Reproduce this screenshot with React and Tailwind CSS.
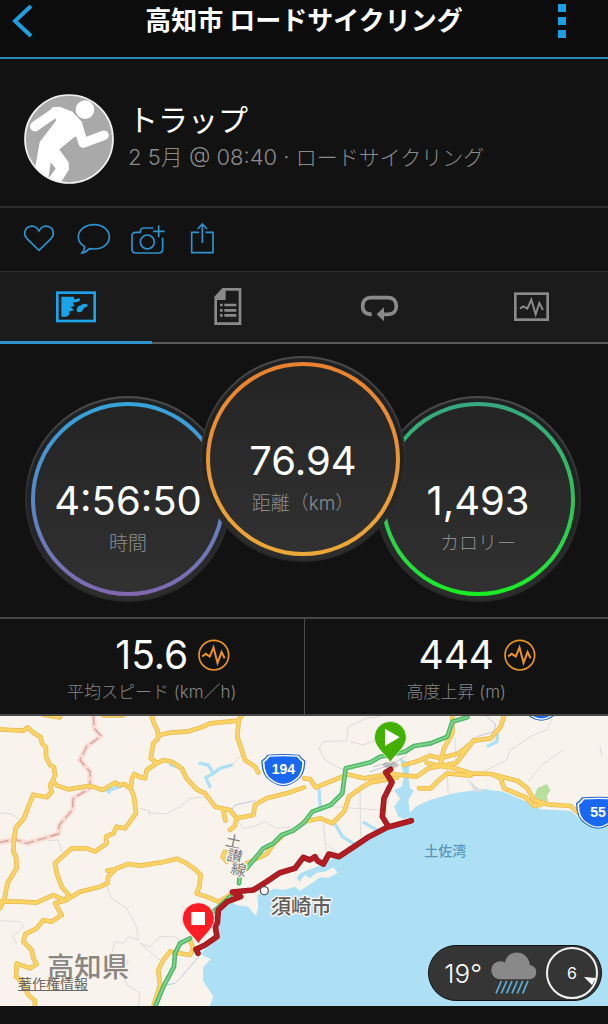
import { useState } from "react";

/**
 * ギザギザの波形アイコン
 */
function PulseIcon() {
  return (
    <svg viewBox="597 85 95 95" className="size-8" fill="none" stroke="#e8932c">
      <circle cx="644" cy="133" r="44" strokeWidth="5" />
      <path
        d="M609 137 L620 129 L632 137 L643 110 L655 156 L667 124 L676 142"
        strokeWidth="6"
      />
    </svg>
  );
}

const actions = [
  {
    label: "いいね",
    viewBox: "63 42 108 108",
    icon: (
      <path d="M117 136 L80 100 C70 88 73 70 87 65 C99 61 111 66 117 78 C123 66 135 61 147 65 C161 70 164 88 154 100 Z" />
    ),
  },
  {
    label: "コメント",
    viewBox: "225 42 108 108",
    icon: (
      <path d="M282 59 C308 59 328 75 328 96 C328 117 308 132 282 132 C277 132 273 132 268 131 C262 138 255 143 246 144 C251 138 254 132 254 125 C242 118 235 108 235 96 C235 75 256 59 282 59 Z" />
    ),
  },
  {
    label: "写真を追加",
    viewBox: "390 42 108 108",
    icon: (
      <>
        <path d="M463 69 H432 C428 69 426 71 425 75 L423 82 H411 C403 82 399 86 399 93 V133 C399 141 403 144 411 144 H479 C487 144 491 141 491 133 V98" />
        <circle cx="445" cy="111" r="21" />
        <path d="M479 61 V97 M462 79 H497" />
      </>
    ),
  },
  {
    label: "共有",
    viewBox: "549 42 108 108",
    icon: (
      <path d="M597 82 H575 V143 H639 V82 H617 M607 114 V58 M593 72 L607 57 L621 72" />
    ),
  },
];

const tabs = [
  {
    label: "マップ",
    viewBox: "165 246 126 120",
    icon: (
      <>
        <rect x="172" y="263" width="112" height="85" fill="none" stroke="currentColor" strokeWidth="8" />
        <path
          fill="currentColor"
          d="M184 275 H222 L222 283 L238 280 Q244 286 235 290 L218 293 L224 303 L212 306 L222 316 L206 320 L210 327 L200 335 H184 Z M230 318 Q229 303 244 301 L248 297 Q262 295 264 302 Q258 307 253 308 Q249 313 246 319 Q236 325 230 318 Z"
        />
      </>
    ),
  },
  {
    label: "統計",
    viewBox: "620 246 126 120",
    icon: (
      <>
        <path
          d="M668 253 H719 V356 H646 V277 Z"
          fill="none"
          stroke="currentColor"
          strokeWidth="8"
        />
        <path d="M668 251 L676 251 V285 H644 V275 Z" fill="currentColor" />
        <path
          d="M659 300 H667 M672 300 H708 M659 316 H667 M672 316 H708 M659 331 H667 M672 331 H708"
          stroke="currentColor"
          strokeWidth="8"
        />
      </>
    ),
  },
  {
    label: "ラップ",
    viewBox: "165 246 126 120",
    icon: (
      <>
        <path
          d="M203 328 C184 328 176 318 176 304 C176 287 186 278 200 278 H253 C268 278 277 288 277 304 C277 319 268 328 252 328 H238"
          fill="none"
          stroke="currentColor"
          strokeWidth="11"
        />
        <path d="M218 328 L240 307 V349 Z" fill="currentColor" />
      </>
    ),
  },
  {
    label: "グラフ",
    viewBox: "621 246 126 120",
    icon: (
      <g fill="none" stroke="currentColor">
        <rect x="634" y="266" width="97" height="78" strokeWidth="8" />
        <path
          d="M648 311 L658 304 L670 311 L682 284 L695 328 L706 294 L717 315"
          strokeWidth="6"
        />
      </g>
    ),
  },
];

/**
 * 円形ゲージ
 */
function Gauge({ value, label, ring, className }) {
  return (
    <div
      className={`size-[206px] shrink-0 rounded-full bg-linear-to-b from-[#4c4c4c] via-[#2c2c2c] to-[#282828] p-[2px] ${className}`}
    >
      <div className="size-full rounded-full bg-linear-to-b from-[#1f2123] via-[#222222] to-[#2e2e2e] p-[4px]">
        <div className={`size-full rounded-full bg-linear-to-b p-[4px] ${ring}`}>
          <div className="flex size-full flex-col items-center rounded-full bg-linear-to-b from-[#242424] to-[#313131] pt-[73px]">
            <span className="text-[40px] leading-[44px] text-white">{value}</span>
            <span className="text-[19px] leading-[42px] font-light text-[#8c8c8c]">{label}</span>
          </div>
        </div>
      </div>
    </div>
  );
}

function Stat({ value, label, className }) {
  return (
    <div className={`flex flex-1 flex-col items-center pt-[14px] ${className}`}>
      <div className="flex items-center gap-[10px] pl-[42px]">
        <span className="text-[39px] leading-[44px] text-white">{value}</span>
        <button type="button" aria-label={`${label} グラフ`}>
          <PulseIcon />
        </button>
      </div>
      <span className="text-[17px] leading-[30px] font-light text-[#858585]">{label}</span>
    </div>
  );
}

const roads = [
  "M0 58 L30 60 L70 62 L83 52 L100 68 L122 82 L126 100 L138 112 L138 140 L150 165 L162 172 L165 195 L158 215 L150 225 L155 245 L140 262 L100 254 L85 290 L72 325 L48 352 L42 385 L40 425 L48 440 L50 475 L22 520 L14 565 L0 595",
  "M158 212 L170 226 L205 238 L265 228 L285 232 L307 240 L345 218 L360 226 L372 222 L392 236 L396 205 L403 192 L420 202 L435 205 L440 180 L470 160 L490 150 L515 155 L545 175 L560 205 L590 238 L615 250 L645 290 L690 300 L710 325 L760 315 L765 285 L800 265 L860 250 L912 232",
  "M455 18 L462 40 L472 60 L475 85 L460 100 L452 145 L470 158",
  "M478 75 L510 68 L560 65 L605 52 L630 40 L715 32 L725 18",
  "M716 32 L712 80 L725 120 L735 150 L765 170 L775 188",
  "M392 235 L402 260 L405 285 L408 310 L375 355 L350 350 L340 370 L318 380 L320 400 L285 425 L260 415 L215 415 L165 460 L170 490 L185 530 L205 553 L197 570",
  "M0 575 L60 575 L110 578 L160 555 L195 572 L240 545 L300 530 L322 520 L325 500 L350 475 L385 462 L420 467 L480 458 L530 446 L560 460 L585 478 L602 495 L598 530 L590 550 L625 562 L655 575 L700 550",
  "M193 572 L165 580 L185 615 L155 635 L130 630 L110 655 L76 672 L70 695 L95 720 L100 745 L110 762 L90 775 L50 760 L48 800 L66 815 L85 855 L105 872 L104 890",
  "M570 690 L580 715 L570 735 L510 725 L490 750 L475 780 L480 825 L460 890",
  "M912 205 L930 207 L947 232 L1022 202 L1042 193 L1092 205 L1172 192 L1250 200 L1285 175 L1322 168 L1370 158 L1422 90",
  "M1212 165 L1257 152 L1290 137 L1322 145 L1377 130 L1422 92 L1472 85 L1502 50 L1512 18",
  "M1357 18 L1357 70 L1332 115 L1320 165",
  "M1280 158 L1320 168 L1362 174 L1412 190 L1472 192 L1552 212 L1582 235 L1602 270 L1642 283 L1712 288 L1742 314",
  "M1257 235 L1292 235 L1317 210 L1342 190 L1412 197 M1480 195 L1502 205 L1512 235 L1577 262 L1602 288 L1622 284",
  "M912 335 L962 325 L997 340 L1032 305 L1047 260 L1082 235 L1112 217 L1190 204",
  "M710 325 L704 348 L690 360 M670 300 L676 332",
  "M740 460 L800 432 L820 402 L850 375",
  "M675 425 L668 440 L680 455 M322 482 L345 478",
  "M130 14 L180 22 M310 16 L370 16",
];

const greens = [
  "M717 520 L720 490 L740 475 L790 415 L820 400 L845 375 L880 362 L912 338 L937 305 L992 285 L1027 250 L1037 175 L1112 157 L1140 140 L1215 125 L1242 108 L1292 100 L1342 80 L1357 35 L1402 22",
  "M690 560 L640 605 M570 685 L540 700 L525 730 L522 770 L490 830 L465 892",
];

const route =
  "M1172 178 L1157 187 L1176 217 L1152 265 L1147 320 L1165 350 M1234 332 L1162 352 L1107 380 L1077 400 L1017 440 L987 432 L970 462 L952 452 L945 440 L930 450 L910 442 L885 475 L840 488 L800 515 L760 540 L697 546 L722 560 L682 575 L655 600 L652 638 L646 650 L651 680 L615 705 L588 718 L594 730";

const boundary =
  "M280 18 L283 55 L303 78 L260 110 L240 150 L270 185 L270 235 L220 265 L217 300 L178 345 L175 372 L80 400 L45 388 L0 397";

const shield =
  "M-48 -46 Q0 -50 48 -46 Q56 -34 66 -28 Q66 18 38 34 Q0 62 -38 34 Q-66 18 -66 -28 Q-56 -34 -48 -46 Z";

function RouteSign({ x, y, number }) {
  return (
    <g transform={`translate(${x} ${y})`}>
      <path d={shield} fill="#2367c8" />
      <path d={shield} transform="scale(.94)" fill="#fff" />
      <path d={shield} transform="scale(.86)" fill="#1b68f0" />
      <text
        y="13"
        textAnchor="middle"
        fontFamily="Liberation Sans, sans-serif"
        fontSize="42"
        fontWeight="700"
        fill="#fff"
      >
        {number}
      </text>
    </g>
  );
}

function Pin({ x, y, color, children }) {
  return (
    <g transform={`translate(${x} ${y})`}>
      <path
        d="M0 76 C-8 56 -48 32 -48 0 A48 48 0 0 1 48 0 C48 32 8 56 0 76 Z"
        fill={color}
        stroke="#fff"
        strokeOpacity=".7"
        strokeWidth="3"
      />
      {children}
    </g>
  );
}

function RouteMap() {
  return (
    <svg
      viewBox="0 18 1824 870"
      preserveAspectRatio="xMidYMid slice"
      className="block h-[290px] w-full"
      strokeLinejoin="round"
      strokeLinecap="round"
      fill="none"
    >
      <rect y="0" width="1824" height="900" fill="#f8f4ed" />

      {/* 海と川 */}
      <path
        fill="#aee0f5"
        d="M1824 350 L1750 335 L1712 302 L1622 298 L1580 275 L1510 245 L1450 237 L1360 250 L1290 270 L1250 288 L1220 318 L1225 335 L1090 390 L1020 435 L985 452 L950 470 L900 490 L880 520 L830 530 L805 545 L772 555 L775 590 L768 618 L745 590 L710 585 L690 575 L655 610 L652 680 L600 732 L632 748 L610 770 L608 810 L640 860 L625 900 L1824 900 Z"
      />
      <path
        fill="#aee0f5"
        d="M1200 145 L1228 160 L1226 205 L1230 235 L1242 242 L1225 270 L1230 310 L1215 328 L1195 320 L1183 290 L1200 265 L1182 240 L1205 230 L1212 200 Z"
      />
      <path
        stroke="#aee0f5"
        strokeWidth="10"
        d="M957 240 L962 300 M1007 345 L1027 380 L1060 400 M1092 338 L1130 360 M600 160 L625 165 L640 190 L660 175 L695 165 M640 190 L617 203 L630 230 M307 240 L330 240 L365 228 M330 235 L327 247 M512 165 L548 175 M1465 108 L1490 95 L1493 75"
      />
      <path
        fill="#f8f4ed"
        d="M815 535 L850 505 L868 522 L885 498 L898 515 L915 495 L930 505 L950 488 L975 485 L1000 472 L1013 488 L985 503 L960 502 L935 520 L900 542 L885 530 L850 540 Z"
      />
      <path fill="#b8dfa0" d="M1602 262 L1612 235 L1640 222 L1652 240 L1640 258 L1645 275 L1615 268 Z" />
      <path fill="#d9dce3" d="M1400 205 L1430 232 L1455 245 L1425 245 Z" />

      {/* 細い道 */}
      <g stroke="#dedbd7" strokeWidth="3">
        <path d="M420 295 L448 302 L450 318 M445 308 L500 312 L540 290 L570 265 L620 260" />
        <path d="M710 328 L730 355 L760 350 L795 335 L830 355 L900 350 M695 170 L712 148 L722 140" />
        <path d="M0 308 L35 312 L60 330 M145 392 L175 390 L185 425 M0 632 L60 635 L70 650 L38 680 L50 700" />
        <path d="M320 530 L335 565 L380 595 L410 650 L415 690 L385 680 L370 700 L345 695 L335 730 L385 755 L365 790 L380 825 L420 850 L415 888" />
        <path d="M420 700 L450 710 L480 680 L520 680 L560 700 M425 705 L480 750" />
        <path d="M957 115 L970 95 L1040 92 L1045 50 L1100 25 L1140 20 M957 115 L975 150 L1030 180 M1052 95 L1090 105 L1130 90" />
        <path d="M1365 85 L1368 190 M1340 180 L1345 250 M1440 190 L1520 150 L1530 120 L1600 75 L1640 60 L1655 30 M1585 215 L1625 165 L1690 120 M1800 110 L1805 138" />
        <path d="M970 340 L980 440 M1080 245 L1082 380 M1000 290 L1140 300 M1010 430 L980 400" />
        <path d="M1120 170 L1160 160 M1110 185 L1170 165 L1215 140" stroke="#c2c6de" />
        <path d="M695 300 L705 285 L765 272 M500 825 L525 820 L545 800 L600 735 M1430 80 L1480 65 L1488 45 L1460 18" stroke="#c2c6de" />
      </g>

      {/* 県境 */}
      <path d={boundary} stroke="#f8dcd5" strokeWidth="16" />
      <path d={boundary} stroke="#d3a19c" strokeWidth="4" strokeDasharray="26 14" />

      <path d={roads.join(" ")} stroke="#eabb52" strokeWidth="14" />
      <path d={roads.join(" ")} stroke="#fcd365" strokeWidth="9" />
      <path d={greens.join(" ")} stroke="#4fb56a" strokeWidth="14" />
      <path d={greens.join(" ")} stroke="#7dd48b" strokeWidth="6" />
      <path d={route} stroke="#8f1a20" strokeWidth="17" />
      <path d={route} stroke="#b21d24" strokeWidth="13" />

      <circle cx="793" cy="542" r="12" fill="#fff" stroke="#555" strokeWidth="4" />

      {/* 地名 */}
      <g stroke="#f8f4ed" strokeWidth="8" paintOrder="stroke" fontWeight="500">
        <text x="674 678 690" y="406 450 490" rotate="12" fontSize="46" fontWeight="400" fill="#807c78">
          土讃線
        </text>
        <text x="141" y="801" fontSize="82" fill="#8a8682">
          高知県
        </text>
        <text x="812" y="612" fontSize="61" fill="#5e5e5e">
          須崎市
        </text>
        <text x="1273" y="438" fontSize="42" fill="#5a96b6" stroke="none">
          土佐湾
        </text>
      </g>

      <RouteSign x={850} y={180} number="194" />
      <RouteSign x={1794} y={308} number="55" />
      <RouteSign x={1624} y={-16} number="" />

      <ellipse cx="1172" cy="165" rx="24" ry="10" fill="#000" opacity=".2" />
      <Pin x={1171} y={82} color="#45b004">
        <path d="M-16 -26 L28 0 L-16 26 Z" fill="#fff" />
      </Pin>
      <Pin x={595} y={626} color="#fb1d24">
        <rect x="-21" y="-20" width="41" height="39" fill="#fff" />
      </Pin>
    </svg>
  );
}

export default function App() {
  const [activeTab, setActiveTab] = useState("マップ");

  return (
    <div className="flex min-h-screen flex-col bg-[#121212] font-['Inter','Noto_Sans_CJK_JP',sans-serif]">
      <header className="flex h-[59px] items-start justify-between border-b-2 border-[#2b89bf] bg-[#0c0c0c] px-3 pt-[3px]">
        <button type="button" aria-label="戻る" className="w-[38px]">
          <svg viewBox="0 0 22 36" className="h-9 w-[22px]" fill="none" stroke="#1b9fe0" strokeWidth="4">
            <path d="M19 3 L3 18 L19 33" />
          </svg>
        </button>
        <h1 className="text-[26px] leading-9 font-bold text-white">
          高知市 ロードサイクリング
        </h1>
        <button type="button" aria-label="メニュー" className="w-[38px]">
          <svg viewBox="0 0 8 36" className="h-9 w-2" fill="#1b9fe0">
            <path d="M0 1 h8 v8 h-8 Z M0 14 h8 v8 h-8 Z M0 27 h8 v8 h-8 Z" />
          </svg>
        </button>
      </header>

      <section className="flex h-[149px] items-center gap-[14px] border-b-2 border-[#2b2b2b] px-6 pt-3">
        <svg viewBox="72 280 270 270" className="size-[90px] shrink-0">
          <clipPath id="avatar">
            <circle cx="207" cy="415" r="133" />
          </clipPath>
          <circle cx="207" cy="415" r="133" fill="#a9a9a9" />
          <g clipPath="url(#avatar)" fill="#fff" stroke="#fff" strokeLinecap="round" strokeLinejoin="round">
            <circle cx="255" cy="327" r="28" stroke="none" />
            <path d="M105 377 L166 335" fill="none" strokeWidth="30" />
            <path
              d="M158 323 L178 321 L215 335 L243 365 L250 395 L222 406 L174 446 L203 486 L204 506 L176 550 L152 530 L171 503 L150 478 L140 550 L105 520 L122 425 L172 360 Z"
              strokeWidth="6"
            />
            <path d="M236 385 L250 427 L312 404" fill="none" strokeWidth="29" />
          </g>
          <circle cx="207" cy="415" r="132" fill="none" stroke="#f0f0f0" strokeWidth="5" />
        </svg>
        <div>
          <h2 className="text-[30px] leading-[38px] text-white">トラップ</h2>
          <p className="text-[22px] leading-[36px] font-light text-[#8c8c8c]">
            2 5月 @ 08:40 · <span className="text-[21px]">ロードサイクリング</span>
          </p>
        </div>
      </section>

      <div className="flex h-16 items-center gap-[18px] border-b border-[#303030] px-[21px] pb-[5px]">
        {actions.map((action) => (
          <button key={action.label} type="button" aria-label={action.label}>
            <svg
              viewBox={action.viewBox}
              className="size-9"
              fill="none"
              stroke="#2e93cc"
              strokeWidth="5"
            >
              {action.icon}
            </svg>
          </button>
        ))}
      </div>

      <nav className="grid h-[72px] grid-cols-4 bg-[#1b1b1b]">
        {tabs.map((tab) => (
          <button
            key={tab.label}
            type="button"
            aria-label={tab.label}
            onClick={() => setActiveTab(tab.label)}
            className={`flex items-center justify-center ${
              activeTab === tab.label
                ? "border-b-3 border-[#2e93cc] text-[#1ba3e8]"
                : "border-b-2 border-[#5c5c5c] text-[#8a8a8a]"
            }`}
          >
            <svg viewBox={tab.viewBox} className="h-10 w-[42px]">
              {tab.icon}
            </svg>
          </button>
        ))}
      </nav>

      <section className="flex justify-center overflow-hidden pt-3 pr-[2px] pb-[15px]">
        <Gauge
          value="4:56:50"
          label="時間"
          ring="from-[#35a3d8] via-[#5488c8] to-[#8068b0]"
          className="mt-10"
        />
        <Gauge
          value="76.94"
          label="距離（km）"
          ring="from-[#e88030] to-[#eca838]"
          className="relative z-10 mx-[-31px] mb-10"
        />
        <Gauge
          value="1,493"
          label="カロリー"
          ring="from-[#38a880] via-[#30c058] to-[#18ee20]"
          className="mt-10"
        />
      </section>

      <section className="flex h-[99px] border-t-2 border-b-2 border-[#484848]">
        <Stat value="15.6" label="平均スピード (km／h)" className="border-r border-[#4a4a4a]" />
        <Stat value="444" label="高度上昇 (m)" className="" />
      </section>

      <section className="relative">
        <RouteMap />
        <a
          href="#legal"
          className="absolute bottom-3 left-[18px] text-[14px] leading-5 text-[#6b6762] underline"
        >
          著作権情報
        </a>
        <div className="absolute right-[6px] bottom-[5px] flex h-14 items-center gap-[9px] rounded-full border border-[#111] bg-[#353535] pr-[3px] pl-[15px] text-white">
          <span className="text-[26px] font-light">19°</span>
          <svg viewBox="564 278 138 126" className="h-[42px] w-[46px]">
            <path
              d="M590 360 C556 356 557 308 592 306 C600 306 602 308 606 310 C611 268 676 268 681 318 C706 320 706 358 680 360 Z"
              fill="#898989"
            />
            <path
              d="M595 365 L579 402 M611 365 L595 402 M627 365 L611 402 M643 365 L627 402 M659 365 L643 402 M675 365 L659 402"
              stroke="#62b1da"
              strokeWidth="5"
            />
          </svg>
          <svg viewBox="0 0 52 52" className="size-[52px]">
            <circle cx="26" cy="26" r="25" fill="none" stroke="#f2f2f2" strokeWidth="2" />
            <path d="M38 30 L50 31 L46 38 Z" fill="#fff" />
            <text x="26" y="32" textAnchor="middle" fontSize="16" fill="#fff">
              6
            </text>
          </svg>
        </div>
      </section>
    </div>
  );
}
